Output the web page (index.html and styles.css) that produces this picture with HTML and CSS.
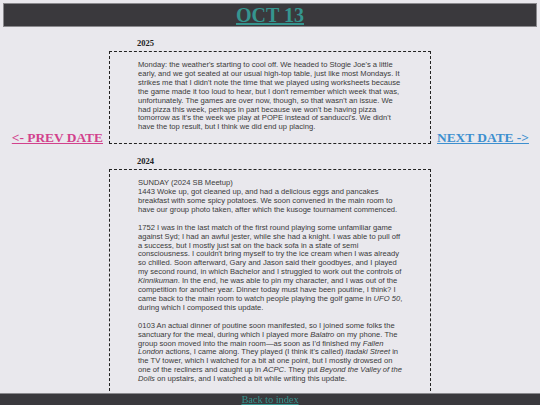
FILE: index.html
```html
<!DOCTYPE html>
<html lang="en">
<head>
  <meta charset="UTF-8">
  <title>Oct 13</title>
  <link rel="stylesheet" href="styles.css">
</head>
<body>

  <header class="top">
    <h1><a href="#">OCT 13</a></h1>
  </header>

  <main class="days">
    <a class="nav prev" href="#">&lt;- PREV DATE</a>

    <section class="entry">
      <h3>2025</h3>
      <div class="box">
        <p>Monday: the weather's starting to cool off. We headed to Stogie Joe's a little early, and we got seated at our usual high-top table, just like most Mondays. It strikes me that I didn't note the time that we played using worksheets because the game made it too loud to hear, but I don't remember which week that was, unfortunately. The games are over now, though, so that wasn't an issue. We had pizza this week, perhaps in part because we won't be having pizza tomorrow as it's the week we play at POPE instead of sanducci's. We didn't have the top result, but I think we did end up placing.</p>
      </div>
    </section>

    <a class="nav next" href="#">NEXT DATE -&gt;</a>

    <section class="entry second">
      <h3>2024</h3>
      <div class="box">
        <p>SUNDAY (2024 SB Meetup)<br>
        1443 Woke up, got cleaned up, and had a delicious eggs and pancakes breakfast with some spicy potatoes. We soon convened in the main room to have our group photo taken, after which the kusoge tournament commenced.</p>

        <p>1752 I was in the last match of the first round playing some unfamiliar game against Syd; I had an awful jester, while she had a knight. I was able to pull off a success, but I mostly just sat on the back sofa in a state of semi consciousness. I couldn't bring myself to try the ice cream when I was already so chilled. Soon afterward, Gary and Jason said their goodbyes, and I played my second round, in which Bachelor and I struggled to work out the controls of <i>Kinnikuman</i>. In the end, he was able to pin my character, and I was out of the competition for another year. Dinner today must have been poutine, I think? I came back to the main room to watch people playing the golf game in <i>UFO 50</i>, during which I composed this update.</p>

        <p>0103 An actual dinner of poutine soon manifested, so I joined some folks the sanctuary for the meal, during which I played more <i>Balatro</i> on my phone. The group soon moved into the main room&mdash;as soon as I'd finished my <i>Fallen London</i> actions, I came along. They played (I think it's called) <i>Itadaki Street</i> in the TV tower, which I watched for a bit at one point, but I mostly drowsed on one of the recliners and caught up in <i>ACPC</i>. They put <i>Beyond the Valley of the Dolls</i> on upstairs, and I watched a bit while writing this update.</p>
      </div>
    </section>
  </main>

  <footer class="bottom">
    <a href="#">Back to index</a>
  </footer>

</body>
</html>
```

FILE: styles.css
```css
body {
  margin: 0;
  padding: 0 0 20px;
  background-color: #e9e8ed;
  color: #333;
  font-family: "Liberation Serif", "Times New Roman", serif;
}

.top {
  margin: 3px;
  background-color: #3a393d;
  border: 1px solid #8a898d;
  text-align: center;
}

.top h1 {
  margin: 0;
  font-size: 20px;
  line-height: 22px;
}

.top a,
.bottom a {
  color: #35958f;
}

.days {
  display: grid;
  grid-template-columns: 1fr 322px 1fr;
  column-gap: 6px;
  padding-top: 8px;
}

.nav {
  align-self: end;
  font-size: 13.4px;
  font-weight: bold;
  line-height: 15px;
  margin-bottom: -1px;
}

.prev {
  justify-self: end;
  color: #d2418c;
}

.next {
  justify-self: start;
  color: #3d8fcf;
}

.entry h3 {
  margin: 0 0 3px 28px;
  font-size: 8.5px;
  line-height: 10px;
  color: #222;
}

.second {
  grid-column: 2;
  margin-top: 12px;
}

.box {
  border: 1px dashed #222;
  padding: 9px 25px 11px 28px;
  font-family: "Liberation Sans", Arial, sans-serif;
  font-size: 7.6px;
  line-height: 8.9px;
  color: #3a3a3a;
}

.box p {
  margin: 0 0 8.9px;
}

.box p:last-child {
  margin-bottom: 0;
}

.bottom {
  position: fixed;
  left: 0;
  right: 0;
  bottom: 0;
  background-color: #3a393d;
  border-top: 1px solid #8a898d;
  text-align: center;
  font-size: 10.3px;
  line-height: 11px;
}
```
